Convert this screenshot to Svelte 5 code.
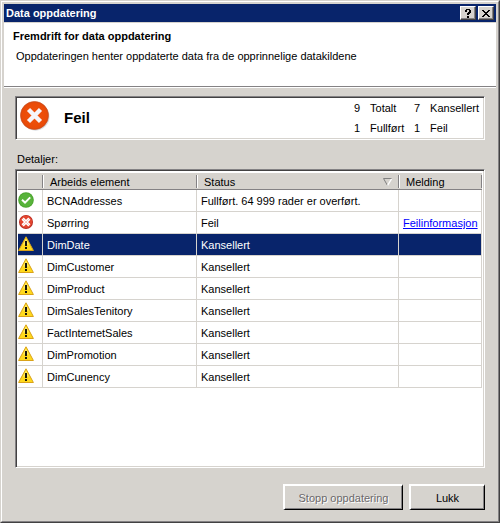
<script>
  const rows = [
    { icon: 'ok', name: 'BCNAddresses', status: 'Fullført. 64 999 rader er overført.' },
    { icon: 'error', name: 'Spørring', status: 'Feil', link: 'Feilinformasjon' },
    { icon: 'warn', name: 'DimDate', status: 'Kansellert', selected: true },
    { icon: 'warn', name: 'DimCustomer', status: 'Kansellert' },
    { icon: 'warn', name: 'DimProduct', status: 'Kansellert' },
    { icon: 'warn', name: 'DimSalesTenitory', status: 'Kansellert' },
    { icon: 'warn', name: 'FactIntemetSales', status: 'Kansellert' },
    { icon: 'warn', name: 'DimPromotion', status: 'Kansellert' },
    { icon: 'warn', name: 'DimCunency', status: 'Kansellert' }
  ];
</script>

<div class="window">
  <div class="frame">
    <div class="titlebar">
      <span class="title">Data oppdatering</span>
      <button class="cap" aria-label="Hjelp">
        <svg width="6" height="9" viewBox="0 0 6 9" shape-rendering="crispEdges"><path d="M1 0h4v1h1v3h-1v1h-1v1h-2v-2h1v-1h1v-2h-2v2h-2v-2h1zM2 7h2v2h-2z" /></svg>
      </button>
      <button class="cap" aria-label="Lukk vindu">
        <svg width="8" height="7" viewBox="0 0 8 7" shape-rendering="crispEdges"><path d="M0 0h2v1h1v1h2v-1h1v-1h2v1h-1v1h-1v1h-1v1h1v1h1v1h1v1h-2v-1h-1v-1h-2v1h-1v1h-2v-1h1v-1h1v-1h1v-1h-1v-1h-1v-1h-1z" /></svg>
      </button>
    </div>

    <header>
      <h1>Fremdrift for data oppdatering</h1>
      <p>Oppdateringen henter oppdaterte data fra de opprinnelige datakildene</p>
    </header>

    <main>
      <section class="summary">
        <svg class="big" width="30" height="30" viewBox="0 0 30 30">
          <defs>
            <radialGradient id="bigred" cx="50%" cy="50%" r="55%">
              <stop offset="0" stop-color="#f0520c" />
              <stop offset="0.8" stop-color="#ea4b08" />
              <stop offset="1" stop-color="#d04010" />
            </radialGradient>
          </defs>
          <circle cx="15.5" cy="15.7" r="14" fill="#d9dde2" />
          <circle cx="14.5" cy="14.5" r="14" fill="url(#bigred)" stroke="#c9501f" stroke-width="0.7" />
          <path d="M8.5 8.5L20.5 20.5M20.5 8.5L8.5 20.5" stroke="#f6f4fa" stroke-width="4.4" />
        </svg>
        <h2>Feil</h2>
        <dl>
          <dt>9</dt><dd>Totalt</dd><dt>7</dt><dd>Kansellert</dd>
          <dt>1</dt><dd>Fullført</dd><dt>1</dt><dd>Feil</dd>
        </dl>
      </section>

      <div class="label" id="details">Detaljer:</div>

      <div class="list">
        <table aria-labelledby="details">
          <colgroup><col class="c1" /><col class="c2" /><col class="c3" /><col /></colgroup>
          <thead>
            <tr>
              <th></th>
              <th>Arbeids element</th>
              <th>
                <div class="sort">
                  Status
                  <svg width="9" height="8" viewBox="0 0 9 8"><path d="M.5 .5L4.5 7.5" stroke="#808080" fill="none" /><path d="M.5 .5H8.5" stroke="#808080" /><path d="M8.5 1L4.5 7.5" stroke="#fff" stroke-width="1.4" fill="none" /></svg>
                </div>
              </th>
              <th>Melding</th>
            </tr>
          </thead>
          <tbody>
            {#each rows as row}
              <tr class:selected={row.selected}>
                <td class="icon">
                  <svg width="16" height="16" viewBox="0 0 16 16">
                    {#if row.icon === 'ok'}
                      <circle cx="8" cy="8" r="7.8" fill="#4ba52f" />
                      <circle cx="8" cy="8" r="6.8" fill="#58b33b" />
                      <path d="M4 7.8L7 10.6L12.2 5.4" fill="none" stroke="#fff" stroke-width="2" />
                    {:else if row.icon === 'error'}
                      <circle cx="8" cy="8" r="7" fill="#b52a20" />
                      <circle cx="8" cy="7.8" r="6.2" fill="#e4452f" />
                      <path d="M4.6 4.6L11.4 11.4M11.4 4.6L4.6 11.4" stroke="#fff" stroke-width="3" />
                      <path d="M5.2 5.2L10.8 10.8M10.8 5.2L5.2 10.8" stroke="#f3c9c2" stroke-width="1" />
                    {:else}
                      <path d="M8 .8L15.4 14.5H.6Z" fill="#ffd91c" stroke="#d9a21a" stroke-linejoin="round" />
                      <path d="M8 2.6L11 8.6H5Z" fill="#ffec62" />
                      <path d="M7 5h2v5H7zM7 11h2v2H7z" fill="#18140a" />
                    {/if}
                  </svg>
                </td>
                <td>{row.name}</td>
                <td>{row.status}</td>
                <td>{#if row.link}<a href="#feil">{row.link}</a>{/if}</td>
              </tr>
            {/each}
          </tbody>
        </table>
      </div>

      <div class="actions">
        <button class="btn stop" disabled>Stopp oppdatering</button>
        <button class="btn close">Lukk</button>
      </div>
    </main>
  </div>
</div>

<style>
  :global(body) {
    margin: 0;
    background: #d6d3ce;
  }
  .window {
    box-sizing: border-box;
    min-height: 100vh;
    display: flex;
    font: 11px/14px "Liberation Sans", Arial, sans-serif;
    color: #000;
    background: #d6d3ce;
    border: 1px solid;
    border-color: #d6d3ce #424142 #424142 #d6d3ce;
  }
  .frame {
    flex: 1;
    display: flex;
    flex-direction: column;
    min-width: 0;
    border: 1px solid;
    border-color: #fff #848284 #848284 #fff;
    padding: 2px;
  }
  .titlebar {
    display: flex;
    align-items: center;
    gap: 2px;
    height: 18px;
    padding: 0 2px;
    background: #08246b;
    color: #fff;
  }
  .title {
    flex: 1;
    font-weight: bold;
  }
  button {
    box-sizing: border-box;
    margin: 0;
    padding: 0;
    font: inherit;
    color: #000;
    background: #d6d3ce;
    border: 1px solid;
    border-color: #fff #424142 #424142 #fff;
    box-shadow: inset -1px -1px #848284;
  }
  .cap {
    display: flex;
    align-items: center;
    justify-content: center;
    width: 16px;
    height: 14px;
  }
  header {
    height: 65px;
    box-sizing: border-box;
    padding: 6px 9px 0;
    background: #fff;
    border-top: 1px solid #d6d3ce;
    border-bottom: 1px solid #848284;
  }
  h1, p, h2, dl, dd {
    margin: 0;
  }
  h1 {
    font-size: 11px;
    line-height: 14px;
  }
  p {
    margin-top: 6px;
    padding-left: 3px;
  }
  main {
    flex: 1;
    display: flex;
    flex-direction: column;
    border-top: 1px solid #fff;
    padding: 8px 11px 9px;
  }
  .summary {
    display: flex;
    align-items: center;
    background: #fff;
    height: 42px;
    border: 1px solid;
    border-color: #848284 #fff #fff #848284;
    box-shadow: inset 1px 1px #424142, inset -1px -1px #d6d3ce;
    padding: 0 5px 0 4px;
  }
  .big {
    margin-bottom: 4px;
  }
  h2 {
    flex: 1;
    margin-left: 14px;
    font-size: 15px;
    line-height: 20px;
  }
  dl {
    display: grid;
    grid-template-columns: 16px 44px 16px auto;
    line-height: 20px;
  }
  .label {
    margin: 12px 0 3px 2px;
  }
  .list {
    flex: 1;
    background: #fff;
    border: 1px solid;
    border-color: #848284 #fff #fff #848284;
    box-shadow: inset 1px 1px #424142, inset -1px -1px #d6d3ce;
    padding: 2px;
  }
  table {
    width: 100%;
    table-layout: fixed;
    border-collapse: separate;
    border-spacing: 0;
  }
  .c1 { width: 25px; }
  .c2 { width: 154px; }
  .c3 { width: 202px; }
  th {
    box-sizing: border-box;
    height: 18px;
    padding: 1px 7px 0;
    font-weight: normal;
    text-align: left;
    background: linear-gradient(#848284, #848284) 100% 50% / 1px 13px no-repeat, #d6d3ce;
    border-top: 1px solid #fff;
    border-bottom: 1px solid #848284;
  }
  th + th {
    background: linear-gradient(#fff, #fff) 0 50% / 1px 13px no-repeat, linear-gradient(#848284, #848284) 100% 50% / 1px 13px no-repeat, #d6d3ce;
  }
  .sort {
    display: flex;
    align-items: center;
    justify-content: space-between;
  }
  td {
    box-sizing: border-box;
    height: 22px;
    padding: 0 4px;
    border-right: 1px solid #d6d3ce;
    border-bottom: 1px solid #d6d3ce;
    white-space: nowrap;
  }
  .icon {
    padding: 0 0 1px;
  }
  .icon svg {
    display: block;
  }
  .selected td {
    background: #08246b;
    color: #fff;
  }
  a {
    color: #00f;
  }
  .actions {
    display: flex;
    justify-content: flex-end;
    gap: 6px;
    margin-top: 16px;
  }
  .btn {
    height: 26px;
    border-width: 2px 1px 1px 2px;
    border-color: #fff #000 #000 #fff;
  }
  .stop {
    width: 120px;
    color: #6b696b;
    text-shadow: 1px 1px #fff;
  }
  .close {
    width: 76px;
  }
</style>
